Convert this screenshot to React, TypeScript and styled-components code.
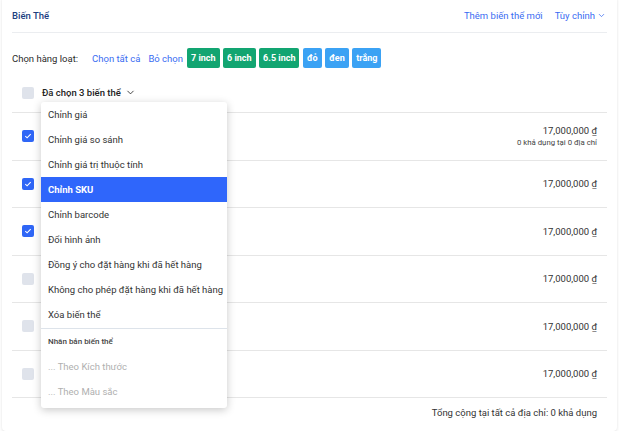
import styled, { createGlobalStyle } from 'styled-components'
import { ChevronDown } from 'lucide-react'

const GlobalStyle = createGlobalStyle`
  html, body {
    margin: 0;
    padding: 0;
    background: #ffffff;
    font-family: Roboto, 'Liberation Sans', sans-serif;
  }
  * { box-sizing: border-box; }
`

interface Variant {
  checked: boolean
  price: string
  note?: string
}

const variants: Variant[] = [
  { checked: true, price: '17,000,000 ₫', note: '0 khả dụng tại 0 địa chỉ' },
  { checked: true, price: '17,000,000 ₫' },
  { checked: true, price: '17,000,000 ₫' },
  { checked: false, price: '17,000,000 ₫' },
  { checked: false, price: '17,000,000 ₫' },
  { checked: false, price: '17,000,000 ₫' },
]

const actions = [
  'Chỉnh giá',
  'Chỉnh giá so sánh',
  'Chỉnh giá trị thuộc tính',
  'Chỉnh SKU',
  'Chỉnh barcode',
  'Đổi hình ảnh',
  'Đồng ý cho đặt hàng khi đã hết hàng',
  'Không cho phép đặt hàng khi đã hết hàng',
  'Xóa biến thể',
]

const sizeTags = ['7 inch', '6 inch', '6.5 inch']
const colorTags = ['đỏ', 'đen', 'trắng']

function CheckBox({ checked }: { checked: boolean }) {
  return (
    <StyledCheck checked={checked}>
      {checked && (
        <svg width='8' height='8' viewBox='0 0 8 8'>
          <path d='M1.3 4.2 L3.1 5.8 L6.7 2.2' fill='none' stroke='#fff' strokeWidth='1.1' />
        </svg>
      )}
    </StyledCheck>
  )
}

export default function App(): JSX.Element {
  return (
    <>
      <GlobalStyle />
      <StyledCard>
        <StyledHeader>
          <StyledTitle>Biến Thể</StyledTitle>
          <StyledHeaderLinks>
            <StyledLink>Thêm biến thể mới</StyledLink>
            <StyledLink>
              Tùy chỉnh <ChevronDown size={9} strokeWidth={2} />
            </StyledLink>
          </StyledHeaderLinks>
        </StyledHeader>

        <StyledBulk>
          <StyledBulkLabel>Chọn hàng loạt:</StyledBulkLabel>
          <StyledLink>Chọn tất cả</StyledLink>
          <StyledLink>Bỏ chọn</StyledLink>
          <StyledTags>
            {sizeTags.map((t) => (
              <StyledTag key={t} tone='green'>
                {t}
              </StyledTag>
            ))}
            {colorTags.map((t) => (
              <StyledTag key={t} tone='blue'>
                {t}
              </StyledTag>
            ))}
          </StyledTags>
        </StyledBulk>

        <StyledHeadRow>
          <CheckBox checked={false} />
          <StyledToggleWrap>
            <StyledToggle>
              Đã chọn 3 biến thể <ChevronDown size={11} strokeWidth={1.8} />
            </StyledToggle>
            <StyledMenu>
              {actions.map((a) => (
                <StyledMenuItem key={a} active={a === 'Chỉnh SKU'}>
                  {a}
                </StyledMenuItem>
              ))}
              <StyledMenuDivider />
              <StyledMenuHeading>Nhân bản biến thể</StyledMenuHeading>
              <StyledMenuItem disabledLook>... Theo Kích thước</StyledMenuItem>
              <StyledMenuItem disabledLook>... Theo Màu sắc</StyledMenuItem>
            </StyledMenu>
          </StyledToggleWrap>
        </StyledHeadRow>

        {variants.map((v, i) => (
          <StyledRow key={i}>
            <CheckBox checked={v.checked} />
            <StyledPrice>
              <span>{v.price}</span>
              {v.note && <StyledNote>{v.note}</StyledNote>}
            </StyledPrice>
          </StyledRow>
        ))}

        <StyledFooter>Tổng cộng tại tất cả địa chỉ: 0 khả dụng</StyledFooter>
      </StyledCard>
    </>
  )
}

const StyledCard = styled.div`
  position: relative;
  margin: -4px 2px 0;
  width: 615px;
  height: 435px;
  padding: 4px 10px 0;
  background: #fff;
  border-radius: 4px;
  box-shadow: 0 1px 3px rgba(0, 0, 0, 0.12);
  display: flex;
  flex-direction: column;
`

const StyledHeader = styled.div`
  height: 33px;
  flex-shrink: 0;
  display: flex;
  align-items: center;
  justify-content: space-between;
  border-bottom: 1px solid #ebedf0;
  padding-bottom: 1px;
`

const StyledTitle = styled.div`
  font-size: 9.5px;
  font-weight: 500;
  color: #20407f;
`

const StyledHeaderLinks = styled.div`
  display: flex;
  gap: 12px;
  padding-right: 1px;
`

const StyledLink = styled.span`
  display: inline-flex;
  align-items: center;
  gap: 2px;
  font-size: 9.5px;
  color: #3a6cf2;
  white-space: nowrap;
`

const StyledBulk = styled.div`
  display: flex;
  flex-shrink: 0;
  align-items: center;
  gap: 8px;
  margin-top: 15px;
  height: 20px;
`

const StyledBulkLabel = styled.span`
  font-size: 9.5px;
  color: #2b2b2b;
  margin-right: 6px;
`

const StyledTags = styled.div`
  display: flex;
  gap: 3.5px;
  margin-left: -4px;
`

const StyledTag = styled.span<{ tone: 'green' | 'blue' }>`
  height: 20px;
  padding: 0 4px;
  display: inline-flex;
  align-items: center;
  border-radius: 2px;
  font-size: 9px;
  font-weight: 700;
  color: #fff;
  background: ${(p) => (p.tone === 'green' ? '#12a571' : '#3ba2f4')};
`

const StyledHeadRow = styled.div`
  height: 45px;
  flex-shrink: 0;
  display: flex;
  align-items: center;
  gap: 8px;
  padding: 5px 0 0 10px;
  border-bottom: 1px solid #e6e6e6;
`

const StyledToggleWrap = styled.div`
  position: relative;
`

const StyledToggle = styled.div`
  display: flex;
  align-items: center;
  gap: 4px;
  height: 14px;
  font-size: 9.5px;
  font-weight: 500;
  color: #222;
`

const StyledMenu = styled.div`
  position: absolute;
  z-index: 5;
  left: -1px;
  top: 16px;
  width: 186px;
  background: #fff;
  border-radius: 3px;
  box-shadow: 0 2px 8px rgba(0, 0, 0, 0.22);
  overflow: hidden;
  padding-bottom: 4px;
`

const StyledMenuItem = styled.div<{ active?: boolean; disabledLook?: boolean }>`
  height: 25px;
  display: flex;
  align-items: center;
  padding-left: 7px;
  font-size: 9.5px;
  white-space: nowrap;
  font-weight: ${(p) => (p.active ? 700 : 400)};
  color: ${(p) => (p.active ? '#fff' : p.disabledLook ? '#b0b0b0' : '#333')};
  background: ${(p) => (p.active ? '#2f66fb' : 'transparent')};
`

const StyledMenuDivider = styled.div`
  height: 1px;
  margin-top: 1px;
  background: #dde3ea;
`

const StyledMenuHeading = styled.div`
  height: 25px;
  display: flex;
  align-items: center;
  padding-left: 7px;
  font-size: 8px;
  font-weight: 500;
  color: #444;
`

const StyledRow = styled.div`
  height: 47.5px;
  flex-shrink: 0;
  display: flex;
  align-items: center;
  justify-content: space-between;
  padding: 0 10px;
  border-bottom: 1px solid #e6e6e6;
`

const StyledCheck = styled.span<{ checked: boolean }>`
  width: 12px;
  height: 12px;
  flex-shrink: 0;
  border-radius: 2px;
  display: inline-flex;
  align-items: center;
  justify-content: center;
  background: ${(p) => (p.checked ? '#2f66f6' : '#dfe3eb')};
`

const StyledPrice = styled.div`
  display: flex;
  flex-direction: column;
  align-items: flex-end;
  gap: 2px;
  font-size: 9.5px;
  color: #333;
`

const StyledNote = styled.span`
  font-size: 7.8px;
  color: #444;
`

const StyledFooter = styled.div`
  height: 28px;
  display: flex;
  align-items: center;
  justify-content: flex-end;
  padding: 0 10px;
  font-size: 9.5px;
  color: #333;
`
